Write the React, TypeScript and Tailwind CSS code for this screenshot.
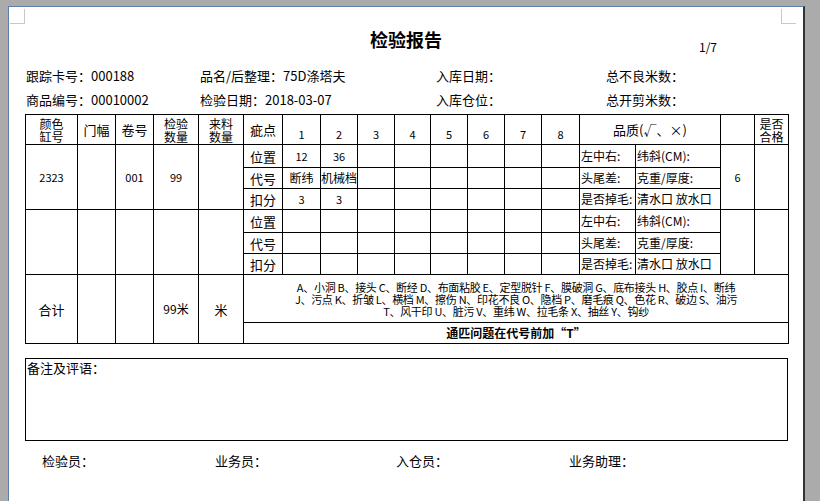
const cols = [52, 38, 38, 45, 45, 39, 38, 37, 37, 36, 37, 37, 37, 38, 56, 85, 34, 34]

const codes = [
  'A、小洞 B、接头 C、断经 D、布面粘胶 E、定型脱针 F、膜破洞 G、底布接头 H、胶点 I、断纬',
  'J、污点 K、折皱 L、横档 M、擦伤 N、印花不良 O、隐档 P、磨毛痕 Q、色花 R、破边 S、油污',
  'T、风干印 U、脏污 V、重纬 W、拉毛条 X、抽丝 Y、钩纱',
]

function Group({ data }: { data?: { pos: string[]; code: string[]; score: string[]; color: string; roll: string; qty: string; grade: string } }) {
  const rows: [string, string[] | undefined, string, string][] = [
    ['位置', data?.pos, '左中右:', '纬斜(CM):'],
    ['代号', data?.code, '头尾差:', '克重/厚度:'],
    ['扣分', data?.score, '是否掉毛:', '清水口 放水口'],
  ]
  return (
    <>
      {rows.map(([label, vals, q1, q2], i) => (
        <tr key={label} className={i === 0 ? 'h-[23px]' : 'h-[21px]'}>
          {i === 0 && (
            <>
              <td rowSpan={3} className="border border-black text-center text-[11px]">{data?.color}</td>
              <td rowSpan={3} className="border border-black" />
              <td rowSpan={3} className="border border-black text-center text-[11px]">{data?.roll}</td>
              <td rowSpan={3} className="border border-black text-center text-[11px]">{data?.qty}</td>
              <td rowSpan={3} className="border border-black" />
            </>
          )}
          <td className="border border-black text-center text-[13px]">{label}</td>
          {Array.from({ length: 8 }).map((_, j) => (
            <td key={j} className={`border border-black text-center whitespace-nowrap ${i === 1 ? 'text-[12px]' : 'text-[11px]'}`}>
              {vals?.[j] ?? ''}
            </td>
          ))}
          <td className="border border-black text-left text-[12px] whitespace-nowrap pl-px">{q1}</td>
          <td className="border border-black text-left text-[12px] whitespace-nowrap pl-px">{q2}</td>
          {i === 0 && (
            <>
              <td rowSpan={3} className="border border-black text-center text-[11px]">{data?.grade}</td>
              <td rowSpan={3} className="border border-black" />
            </>
          )}
        </tr>
      ))}
    </>
  )
}

export default function App() {
  return (
    <div className="w-[820px] h-[501px] bg-[#ababab] overflow-hidden pt-[6px] pl-[8px]" style={{ fontFamily: '"Noto Sans CJK SC", "Liberation Sans", sans-serif' }}>
      <div className="relative w-[797px] h-[495px] bg-white border-l border-[#5a7fb0] border-r-2 border-r-[#333] border-t border-t-[#5a7fb0] text-black">
        <div className="absolute left-[1px] top-[2px] w-[15px] h-[15px] border-r border-b border-[#c8c8c8]" />
        <div className="absolute right-[7px] top-[2px] w-[15px] h-[15px] border-l border-b border-[#c8c8c8]" />

        <div className="pt-[20px] text-center text-[18px] font-bold leading-[24px]">检验报告</div>
        <div className="flex justify-end pr-[86px] -mt-[11px] text-[12px] leading-[14px]">1/7</div>

        <div className="ml-[17px] mt-[10px] grid grid-cols-[174px_236px_170px_180px] text-[13px] leading-[24px]">
          <span>跟踪卡号：000188</span>
          <span>品名/后整理：75D涤塔夫</span>
          <span>入库日期：</span>
          <span>总不良米数：</span>
          <span>商品编号：00010002</span>
          <span>检验日期：2018-03-07</span>
          <span>入库仓位：</span>
          <span>总开剪米数：</span>
        </div>

        <table className="ml-[16px] mt-[2px] border-collapse table-fixed w-[763px] leading-none">
          <colgroup>
            {cols.map((w, i) => <col key={i} style={{ width: w }} />)}
          </colgroup>
          <tbody>
            <tr className="h-[30px]">
              <td className="border border-black text-center text-[12px] leading-[13px]">颜色<br />缸号</td>
              <td className="border border-black text-center text-[13px]">门幅</td>
              <td className="border border-black text-center text-[13px]">卷号</td>
              <td className="border border-black text-center text-[12px] leading-[13px]">检验<br />数量</td>
              <td className="border border-black text-center text-[12px] leading-[13px]">来料<br />数量</td>
              <td className="border border-black text-center text-[13px]">疵点</td>
              {[1, 2, 3, 4, 5, 6, 7, 8].map((n) => (
                <td key={n} className="border border-black text-center text-[11px] align-bottom pb-[4px]">{n}</td>
              ))}
              <td colSpan={2} className="border border-black text-center text-[13px]">品质(√、×)</td>
              <td className="border border-black" />
              <td className="border border-black text-center text-[12px] leading-[13px]">是否<br />合格</td>
            </tr>
            <Group data={{ pos: ['12', '36'], code: ['断纬', '机械档'], score: ['3', '3'], color: '2323', roll: '001', qty: '99', grade: '6' }} />
            <Group />
            <tr className="h-[48px]">
              <td rowSpan={2} className="border border-black text-center text-[13px]">合计</td>
              <td rowSpan={2} className="border border-black" />
              <td rowSpan={2} className="border border-black" />
              <td rowSpan={2} className="border border-black text-center text-[12px]">99米</td>
              <td rowSpan={2} className="border border-black text-center text-[13px]">米</td>
              <td colSpan={13} className="border border-black text-center text-[11px] leading-[12px] tracking-[-0.3px]">
                {codes.map((c) => <div key={c} className="whitespace-nowrap">{c}</div>)}
              </td>
            </tr>
            <tr className="h-[21px]">
              <td colSpan={13} className="border border-black text-center text-[12px] font-bold">通匹问题在代号前加“T”</td>
            </tr>
          </tbody>
        </table>

        <div className="ml-[16px] mt-[14px] w-[763px] h-[83px] border border-black text-[13px] leading-[16px] pl-[1px] pt-[1px]">备注及评语：</div>

        <div className="ml-[33px] mt-[10px] grid grid-cols-[173px_181px_173px_180px] text-[13px]">
          <span>检验员：</span>
          <span>业务员：</span>
          <span>入仓员：</span>
          <span>业务助理：</span>
        </div>
      </div>
    </div>
  )
}
